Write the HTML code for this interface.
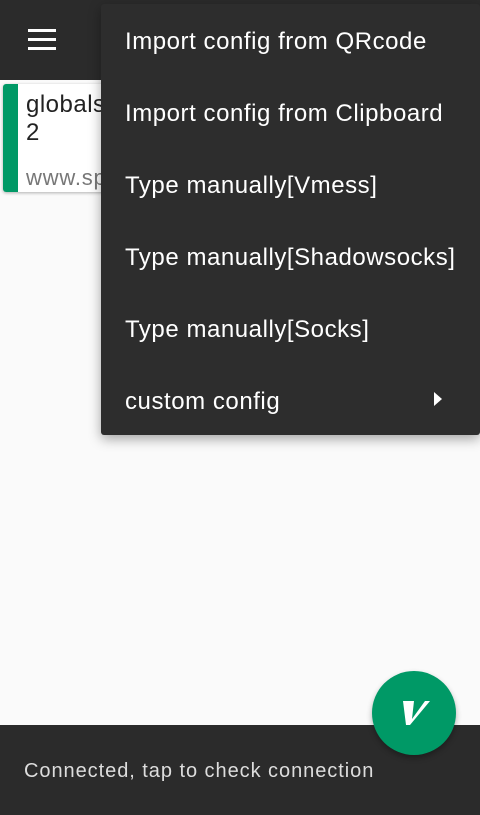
<!DOCTYPE html>
<html><head><style>
body{margin:0;width:480px;height:815px;background:#fafafa;font-family:"Liberation Sans",sans-serif;position:relative;overflow:hidden}
.bar{position:absolute;left:0;top:0;width:480px;height:80px;background:#2b2b2b}
.ham{position:absolute;left:28px;top:29px;width:28px}
.ham div{height:3px;background:#fff;margin-bottom:6px}
.card{position:absolute;left:3px;top:84px;width:120px;height:108px;background:#fff;border-radius:3px;box-shadow:0 1px 3px rgba(0,0,0,.3)}
.card .g{position:absolute;left:0;top:0;width:15px;height:108px;background:#009966;border-radius:3px 0 0 3px}
.t{position:absolute;left:23px;top:7px;font-size:24px;color:#222;line-height:28px;letter-spacing:.5px}
.u{position:absolute;left:23px;top:81px;font-size:22px;color:#777;letter-spacing:.8px}
.menu{position:absolute;left:101px;top:4px;width:379px;height:431px;background:#2d2d2d;border-radius:3px;box-shadow:0 4px 12px rgba(0,0,0,.35)}
.mi{position:absolute;left:24px;font-size:24px;color:#fff;letter-spacing:.55px}
.foot{position:absolute;left:0;top:725px;width:480px;height:90px;background:#2b2b2b}
.foot span{position:absolute;left:24px;top:35px;font-size:20px;color:#ddd;letter-spacing:.95px}
.fab{position:absolute;left:372px;top:671px;width:84px;height:84px;border-radius:50%;background:#009966;box-shadow:0 3px 6px rgba(0,0,0,.3)}
</style></head><body>
<div class="bar"><div class="ham"><div></div><div></div><div></div></div></div>
<div class="card"><div class="g"></div><div class="t">globals<br>2</div><div class="u">www.sp</div></div>
<div class="menu">
<div class="mi" style="top:24px">Import config from QRcode</div>
<div class="mi" style="top:96px">Import config from Clipboard</div>
<div class="mi" style="top:168px">Type manually[Vmess]</div>
<div class="mi" style="top:240px">Type manually[Shadowsocks]</div>
<div class="mi" style="top:312px">Type manually[Socks]</div>
<div class="mi" style="top:384px">custom config</div>
<svg style="position:absolute;left:333px;top:388px" width="8" height="14"><path d="M0 0L8 7L0 14Z" fill="#fff"/></svg>
</div>
<div class="foot"><span>Connected, tap to check connection</span></div>
<div class="fab"><svg width="84" height="84"><path d="M31 30H42L40 48L53 30H58L38 54H34Z" fill="#fff"/></svg></div>
</body></html>
